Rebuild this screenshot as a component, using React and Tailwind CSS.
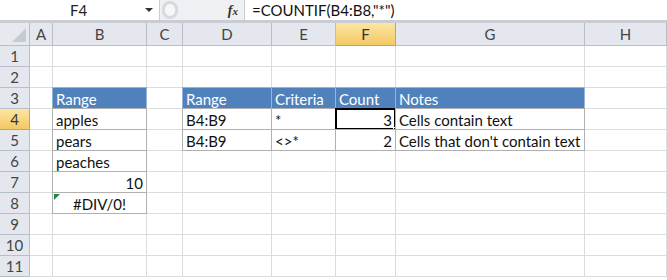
import { Fragment } from "react";

const cols = ["A", "B", "C", "D", "E", "F", "G", "H"];
const rows = [1, 2, 3, 4, 5, 6, 7, 8, 9, 10, 11];

const blue = "bg-[#4f81bd] text-white border-[#95b3d7]";
const cell = "bg-white text-[#111] border-[#b0b0b0]";

// key: "col+row"
const data = {
  B3: { t: "Range", c: blue },
  B4: { t: "apples", c: cell },
  B5: { t: "pears", c: cell },
  B6: { t: "peaches", c: cell },
  B7: { t: "10", c: cell, a: "right" },
  B8: { t: "#DIV/0!", c: cell, a: "center", err: true },
  D3: { t: "Range", c: blue },
  E3: { t: "Criteria", c: blue },
  F3: { t: "Count", c: blue },
  G3: { t: "Notes", c: blue },
  D4: { t: "B4:B9", c: cell },
  E4: { t: "*", c: cell },
  F4: { t: "3", c: cell, a: "right", sel: true },
  G4: { t: "Cells contain text", c: cell },
  D5: { t: "B4:B9", c: cell },
  E5: { t: "<>*", c: cell },
  F5: { t: "2", c: cell, a: "right" },
  G5: { t: "Cells that don't contain text", c: cell },
};

function Cell({ id }) {
  const d = data[id];
  if (!d) return <div className="border-r border-b border-[#dadcdd] bg-white" />;
  const align = d.a === "right" ? "justify-end" : d.a === "center" ? "justify-center" : "justify-start";
  return (
    <div className={`relative flex items-center pt-[2px] px-[3px] border-r border-b -ml-px -mt-px border-l border-t ${d.c} ${align}`}>
      {d.err && (
        <svg className="absolute left-[1px] top-[1px]" width="6" height="6" viewBox="0 0 6 6">
          <path d="M0 0H6L0 6Z" fill="#1e8a3a" />
        </svg>
      )}
      <span className="leading-none">{d.t}</span>
      {d.sel && (
        <>
          <span className="absolute -inset-[1px] border-2 border-black pointer-events-none" />
          <span className="absolute -right-[3px] -bottom-[3px] w-[5px] h-[5px] bg-black border border-white" />
        </>
      )}
    </div>
  );
}

const hdrOn = "bg-gradient-to-b from-[#fbe6a2] to-[#f4c863] border-[#c9a64d] text-[#333]";
const hdrOff = "bg-[#e4e8ee] border-[#b8bec7] text-[#444]";

export default function App() {
  return (
    <div className="w-[667px] h-[280px] overflow-hidden bg-white text-[15px]" style={{ fontFamily: "Lato, 'Open Sans', sans-serif" }}>
      {/* formula bar */}
      <div className="flex h-[23px] border-b-[3px] border-[#c9cdd3] bg-white">
        <div className="w-[160px] flex items-center border-r border-[#c9cdd3]">
          <span className="flex-1 text-center text-[#222] pl-[12px]">F4</span>
          <span className="mr-[6px] w-0 h-0 border-l-[4px] border-r-[4px] border-t-[4px] border-l-transparent border-r-transparent border-t-[#333]" />
        </div>
        <div className="w-[85px] flex items-center bg-[#eef0f3] border-r border-[#c9cdd3]">
          <span className="ml-[2px] w-[16px] h-[18px] rounded-full border-[3px] border-[#d6d9de] bg-[#f6f7f9]" />
          <span className="ml-auto mr-[6px] italic font-bold text-[#333] text-[14px]" style={{ fontFamily: "'Liberation Serif', serif" }}>
            f<span className="text-[11px]">x</span>
          </span>
        </div>
        <div className="flex-1 flex items-center pl-[7px] text-[#111]">=COUNTIF(B4:B8,"*")</div>
      </div>

      {/* sheet grid */}
      <div className="grid grid-cols-[30px_23px_94px_36px_89px_64px_60px_189px_1fr] grid-rows-[23px_repeat(11,21px)]">
        <div className="bg-[#e6e9ee] border-r border-b border-[#b8bec7] relative">
          <svg className="absolute right-[3px] bottom-[3px]" width="14" height="14" viewBox="0 0 14 14">
            <path d="M14 0V14H0Z" fill="#c6cbd2" />
          </svg>
        </div>
        {cols.map((c) => (
          <div key={c} className={`flex items-center justify-center border-r border-b ${c === "F" ? hdrOn : hdrOff}`}>
            {c}
          </div>
        ))}
        {rows.map((r) => (
          <Fragment key={r}>
            <div className={`flex items-center justify-center border-r border-b ${r === 4 ? hdrOn : hdrOff}`}>{r}</div>
            {cols.map((c) => (
              <Cell key={c + r} id={c + r} />
            ))}
          </Fragment>
        ))}
      </div>
    </div>
  );
}
